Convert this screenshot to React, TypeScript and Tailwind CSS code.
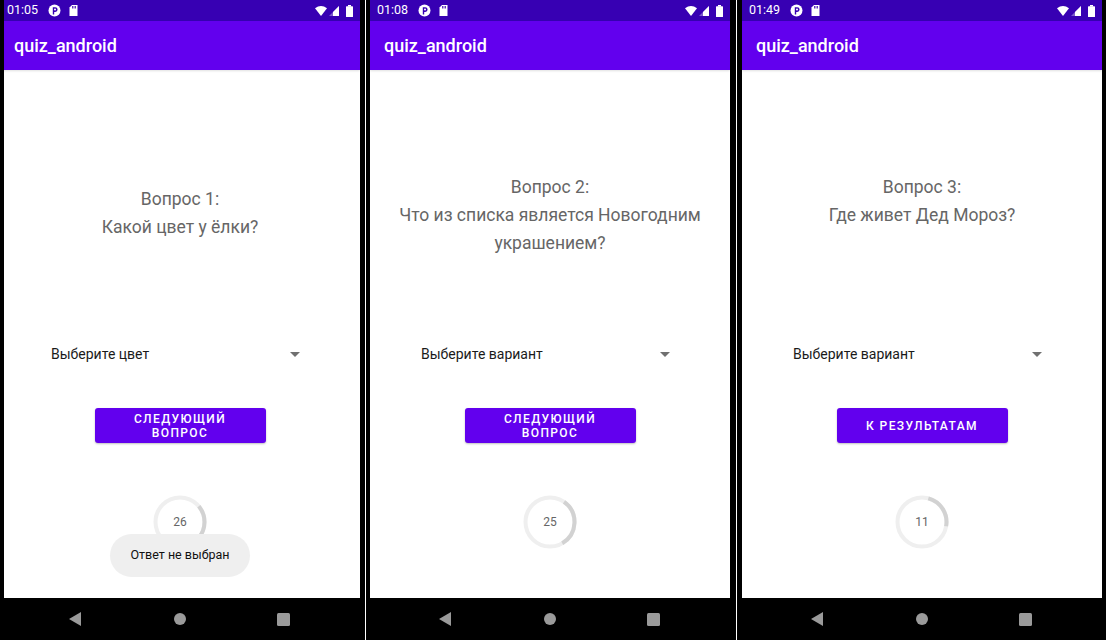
import React from "react";

const FONT = { fontFamily: "Roboto, 'Noto Sans', sans-serif" };

function arcPath(cx: number, cy: number, r: number, from: number, to: number) {
  const p = (a: number) => {
    const rad = (a * Math.PI) / 180;
    return [cx + r * Math.sin(rad), cy - r * Math.cos(rad)];
  };
  const [x1, y1] = p(from);
  const [x2, y2] = p(to);
  const large = to - from > 180 ? 1 : 0;
  return `M ${x1} ${y1} A ${r} ${r} 0 ${large} 1 ${x2} ${y2}`;
}

function StatusBar({ time }: { time: string }) {
  return (
    <div className="h-[21px] bg-[#3700b3] flex items-center pl-[7px] pr-[7px] text-white">
      <span className="text-[12.5px] leading-none">{time}</span>
      <svg width="13" height="13" viewBox="0 0 13 13" className="ml-[10px]">
        <circle cx="6.5" cy="6.5" r="6" fill="#fff" />
        <path d="M4.8 3.2 h2.4 a2.4 2.4 0 0 1 0 4.8 h-1 v2.6 h-1.4 z" fill="#3700b3" />
        <circle cx="7" cy="5.6" r="1" fill="#fff" />
      </svg>
      <svg width="9" height="11" viewBox="0 0 9 11" className="ml-[8px]">
        <path d="M3 0 H8.5 V11 H0.5 V2.5 Z" fill="#fff" />
        <path d="M3.5 1 v2.5 M5 1 v2.5 M6.5 1 v2.5" stroke="#3700b3" strokeWidth="0.8" />
      </svg>
      <div className="flex-1" />
      <svg width="12" height="10" viewBox="0 0 12 10">
        <path d="M0 2.2 Q6 -2 12 2.2 L6 10 Z" fill="#fff" />
      </svg>
      <svg width="10" height="10" viewBox="0 0 10 10" className="ml-[2px]">
        <path d="M10 0 V10 H0 Z" fill="#fff" fillOpacity="0.35" />
        <path d="M10 0 V10 H4 V6 Z" fill="#fff" />
      </svg>
      <svg width="7" height="12" viewBox="0 0 7 12" className="ml-[7px]">
        <rect x="2" y="0" width="3" height="1.5" fill="#fff" />
        <rect x="0" y="1.3" width="7" height="10.7" rx="0.6" fill="#fff" />
      </svg>
    </div>
  );
}

function NavBar() {
  return (
    <div className="h-[42px] bg-black flex items-center">
      <div className="w-[180px] flex">
        <svg width="12" height="14" viewBox="0 0 12 14" className="ml-[69px]">
          <path d="M12 0 V14 L0 7 Z" fill="#9a9a9a" />
        </svg>
      </div>
      <svg width="12" height="12" viewBox="0 0 12 12" className="-ml-[6px]">
        <circle cx="6" cy="6" r="6" fill="#9a9a9a" />
      </svg>
      <svg width="13" height="13" viewBox="0 0 13 13" className="ml-[91px]">
        <rect width="13" height="13" rx="1.5" fill="#9a9a9a" />
      </svg>
    </div>
  );
}

function Timer({ value, from, to }: { value: number; from: number; to: number }) {
  return (
    <div className="relative w-[54px] h-[54px] flex items-center justify-center">
      <svg width="54" height="54" viewBox="0 0 54 54" className="absolute inset-0">
        <circle cx="27" cy="27" r="24.5" fill="none" stroke="#efefef" strokeWidth="4" />
        <path d={arcPath(27, 27, 24.5, from, to)} fill="none" stroke="#d2d2d2" strokeWidth="4" />
      </svg>
      <span className="relative text-[12px] text-[#666666]">{value}</span>
    </div>
  );
}

type ScreenProps = {
  time: string;
  lines: string[];
  textTop: number;
  hint: string;
  button: string[];
  timer: number;
  arc: [number, number];
  toast?: string;
};

function Screen({ time, lines, textTop, hint, button, timer, arc, toast }: ScreenProps) {
  return (
    <div className="w-[360px] h-[640px] flex flex-col shrink-0" style={FONT}>
      <StatusBar time={time} />
      <div className="h-[49px] bg-[#6200ee] flex items-center pl-[14px] shadow-[0_1px_2px_rgba(0,0,0,0.12)] relative z-10">
        <span className="text-white text-[18px] font-medium">quiz_android</span>
      </div>
      <div className="relative flex-1 bg-white flex flex-col items-center">
        <div className="h-[272px] w-full flex flex-col items-center">
          <div style={{ height: textTop }} />
          {lines.map((l) => (
            <div key={l} className="text-[17.5px] leading-[28px] text-[#666666] text-center">
              {l}
            </div>
          ))}
        </div>
        <div className="w-full h-[24px] flex items-center pl-[51px] pr-[60px]">
          <span className="flex-1 text-[14px] text-[#1a1a1a]">{hint}</span>
          <svg width="10" height="5" viewBox="0 0 10 5">
            <path d="M0 0 H10 L5 5 Z" fill="#707070" />
          </svg>
        </div>
        <button className="mt-[42px] w-[171px] h-[35px] rounded-[3px] bg-[#6200ee] text-white text-[12px] font-medium tracking-[1.4px] leading-[14px] flex flex-col items-center justify-center shadow-[0_1px_2px_rgba(0,0,0,0.25)]">
          {button.map((b) => (
            <span key={b}>{b}</span>
          ))}
        </button>
        <div className="mt-[52px]">
          <Timer value={timer} from={arc[0]} to={arc[1]} />
        </div>
        {toast && (
          <div className="absolute left-[110px] top-[464px] w-[140px] h-[43px] rounded-full bg-[#efefef] flex items-center justify-center text-[12.5px] text-[#111111]">
            {toast}
          </div>
        )}
      </div>
      <NavBar />
    </div>
  );
}

function Divider({ left, right }: { left: number; right: number }) {
  return (
    <div className="h-[640px] flex shrink-0">
      <div style={{ width: left }} />
      <div className="w-px bg-white" />
      <div style={{ width: right }} />
    </div>
  );
}

export default function App() {
  return (
    <div className="w-[1106px] h-[640px] bg-black flex overflow-hidden">
      <div className="w-[356px] ml-1 overflow-hidden shrink-0">
        <div className="-ml-1">
          <Screen
            time="01:05"
            lines={["Вопрос 1:", "Какой цвет у ёлки?"]}
            textTop={115}
            hint="Выберите цвет"
            button={["СЛЕДУЮЩИЙ", "ВОПРОС"]}
            timer={26}
            arc={[50, 130]}
            toast="Ответ не выбран"
          />
        </div>
      </div>
      <Divider left={5} right={4} />
      <Screen
        time="01:08"
        lines={["Вопрос 2:", "Что из списка является Новогодним", "украшением?"]}
        textTop={103}
        hint="Выберите вариант"
        button={["СЛЕДУЮЩИЙ", "ВОПРОС"]}
        timer={25}
        arc={[35, 150]}
      />
      <Divider left={6} right={5} />
      <Screen
        time="01:49"
        lines={["Вопрос 3:", "Где живет Дед Мороз?"]}
        textTop={103}
        hint="Выберите вариант"
        button={["К РЕЗУЛЬТАТАМ"]}
        timer={11}
        arc={[15, 100]}
      />
    </div>
  );
}
